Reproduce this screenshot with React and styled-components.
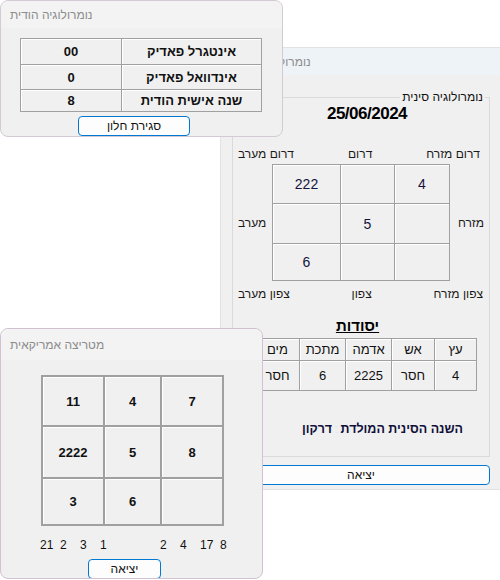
import React from "react";
import styled, { createGlobalStyle } from "styled-components";

const Global = createGlobalStyle`
  html, body { margin: 0; padding: 0; background: #fff; }
  body { font-family: "Liberation Sans", Arial, sans-serif; }
`;

const Desktop = styled.div`
  position: relative;
  width: 500px;
  height: 580px;
  overflow: hidden;
  background: #fff;
`;

const Window = styled.div`
  position: absolute;
  left: ${(p) => p.$x}px;
  top: ${(p) => p.$y}px;
  width: ${(p) => p.$w}px;
  height: ${(p) => p.$h}px;
  z-index: ${(p) => p.$z};
  box-sizing: border-box;
  border: 1px solid ${(p) => p.$edge};
  border-radius: 8px;
  background: #f0f0f0;
  display: flex;
  flex-direction: column;
  overflow: hidden;
`;

const TitleBar = styled.div`
  flex: none;
  height: ${(p) => p.$h}px;
  background: ${(p) => p.$tint};
  display: flex;
  align-items: center;
  padding-left: 9px;
  font-size: 12px;
  color: #8c8c8c;
  white-space: nowrap;
`;

const Body = styled.div`
  display: flex;
  flex-direction: column;
  align-items: flex-start;
  padding: ${(p) => p.$pad};
`;

const CellGrid = styled.div`
  display: grid;
  grid-template-columns: ${(p) => p.$cols};
  grid-template-rows: ${(p) => p.$rows};
  gap: ${(p) => p.$line}px;
  padding: ${(p) => p.$line}px;
  background: #a0a0a0;
  margin-left: ${(p) => p.$ml || 0}px;
  flex: none;
`;

const Cell = styled.div`
  background: #f0f0f0;
  box-shadow: inset 1px 1px 0 #ffffff;
  display: flex;
  align-items: center;
  justify-content: center;
  direction: rtl;
  font-size: ${(p) => p.$size || 13}px;
  font-weight: ${(p) => (p.$bold ? 700 : 400)};
  color: ${(p) => p.$color || "#111"};
  white-space: nowrap;
`;

const Button = styled.button`
  flex: none;
  box-sizing: border-box;
  height: 20px;
  width: ${(p) => (p.$w ? `${p.$w}px` : "auto")};
  align-self: ${(p) => (p.$w ? "flex-start" : "stretch")};
  margin: ${(p) => p.$m || 0};
  padding: 0;
  border: 1px solid #0078d4;
  border-radius: 4px;
  background: #fdfdfd;
  font-family: inherit;
  font-size: 12px;
  color: #111;
`;

const GroupBox = styled.fieldset`
  align-self: stretch;
  margin: 0;
  padding: 0 0 19px;
  min-width: 0;
  border: 1px solid #dadada;
  display: flex;
  flex-direction: column;
`;

const Legend = styled.legend`
  margin-left: auto;
  margin-right: 4px;
  padding: 0 2px;
  font-size: 12px;
  line-height: 14px;
  color: #111;
`;

const DateLine = styled.div`
  font-size: 17px;
  font-weight: 700;
  letter-spacing: -0.5px;
  line-height: 20px;
  text-align: center;
  padding-left: 12px;
  color: #000;
`;

const LabelRow = styled.div`
  display: flex;
  justify-content: space-between;
  margin-top: ${(p) => p.$mt}px;
  padding: ${(p) => p.$pad};
  font-size: 12px;
  line-height: 14px;
  color: #1a1a1a;
`;

const Label = styled.span`
  direction: rtl;
  white-space: nowrap;
`;

const CompassRow = styled.div`
  display: grid;
  grid-template-columns: 1fr auto 1fr;
  align-items: center;
  margin-top: 3px;
  font-size: 12px;
  line-height: 14px;
  color: #1a1a1a;
`;

const SideLabel = styled.span`
  direction: rtl;
  justify-self: ${(p) => (p.$end ? "end" : "start")};
  padding: 0 5px;
`;

const Heading = styled.div`
  margin-top: 16px;
  font-size: 15px;
  font-weight: 700;
  line-height: 18px;
  text-decoration: underline;
  text-align: center;
  padding-right: 7px;
  color: #000;
`;

const TableRow = styled.div`
  display: flex;
  justify-content: flex-end;
  margin-top: 3px;
  padding-right: 12px;
`;

const YearLine = styled.div`
  direction: rtl;
  margin-top: 30px;
  padding-right: 26px;
  font-size: 12.5px;
  font-weight: 700;
  line-height: 16px;
  color: #10103a;
  white-space: nowrap;
`;

const Colon = styled.span`
  color: #cfe9f2;
  font-weight: 400;
  margin: 0 -1px;
`;

const NumberStrip = styled.div`
  display: grid;
  grid-template-columns: repeat(10, 20px);
  margin: 12px 0 0 39px;
  font-size: 12px;
  line-height: 14px;
  color: #111;
`;

const compassCells = ["222", "", "4", "", "5", "", "6", "", ""];
const matrixCells = ["11", "4", "7", "2222", "5", "8", "3", "6", ""];
const strip = ["21", "2", "3", "1", "", "", "2", "4", "17", "8"];

export default function App() {
  return (
    <>
      <Global />
      <Desktop>
        <Window $x={220} $y={47} $w={290} $h={443} $z={1} $edge="#e2e2e2">
          <TitleBar $h={27} $tint="#eef3f8">נומרולוגיה סינית</TitleBar>
          <Body $pad="15px 19px 0 11px">
            <GroupBox>
              <Legend>נומרולוגיה סינית</Legend>
              <DateLine>25/06/2024</DateLine>
              <LabelRow $mt={23} $pad="0 9px 0 5px">
                <Label>דרום מערב</Label>
                <Label>דרום</Label>
                <Label>דרום מזרח</Label>
              </LabelRow>
              <CompassRow>
                <SideLabel>מערב</SideLabel>
                <CellGrid $cols="67px 53px 54px" $rows="38px 39px 36px" $line={1}>
                  {compassCells.map((v, i) => (
                    <Cell key={i} $size={14} $color="#14143c">{v}</Cell>
                  ))}
                </CellGrid>
                <SideLabel $end>מזרח</SideLabel>
              </CompassRow>
              <LabelRow $mt={6} $pad="0 6px 0 5px">
                <Label>צפון מערב</Label>
                <Label>צפון</Label>
                <Label>צפון מזרח</Label>
              </LabelRow>
              <Heading>יסודות</Heading>
              <TableRow>
                <CellGrid $cols="43px 45px 45px 42px 41px" $rows="21px 29px" $line={1}>
                  <Cell>מים</Cell>
                  <Cell>מתכת</Cell>
                  <Cell>אדמה</Cell>
                  <Cell>אש</Cell>
                  <Cell>עץ</Cell>
                  <Cell>חסר</Cell>
                  <Cell>6</Cell>
                  <Cell>2225</Cell>
                  <Cell>חסר</Cell>
                  <Cell>4</Cell>
                </CellGrid>
              </TableRow>
              <YearLine>
                השנה הסינית המולדת <Colon>:</Colon> דרקון
              </YearLine>
            </GroupBox>
            <Button $m="8px 0 0">יציאה</Button>
          </Body>
        </Window>

        <Window $x={0} $y={0} $w={283} $h={137} $z={2} $edge="#d3cad3">
          <TitleBar $h={27} $tint="#f3f3f3">נומרולוגיה הודית</TitleBar>
          <Body $pad="10px 19px 0">
            <CellGrid $cols="100px 139px" $rows="25px 24px 21px" $line={1}>
              <Cell $bold>00</Cell>
              <Cell $bold>אינטגרל פאדיק</Cell>
              <Cell $bold>0</Cell>
              <Cell $bold>אינדוואל פאדיק</Cell>
              <Cell $bold>8</Cell>
              <Cell $bold>שנה אישית הודית</Cell>
            </CellGrid>
            <Button $w={112} $m="4px 0 0 58px">סגירת חלון</Button>
          </Body>
        </Window>

        <Window $x={0} $y={328} $w={263} $h={251} $z={3} $edge="#d0c2d0">
          <TitleBar $h={31} $tint="#f3f3f3">מטריצה אמריקאית</TitleBar>
          <Body $pad="15px 0 0">
            <CellGrid $cols="60px 55px 60px" $rows="48px 50px 45px" $line={2} $ml={40}>
              {matrixCells.map((v, i) => (
                <Cell key={i} $bold>{v}</Cell>
              ))}
            </CellGrid>
            <NumberStrip>
              {strip.map((v, i) => (
                <span key={i}>{v}</span>
              ))}
            </NumberStrip>
            <Button $w={73} $m="7px 0 0 87px">יציאה</Button>
          </Body>
        </Window>
      </Desktop>
    </>
  );
}
